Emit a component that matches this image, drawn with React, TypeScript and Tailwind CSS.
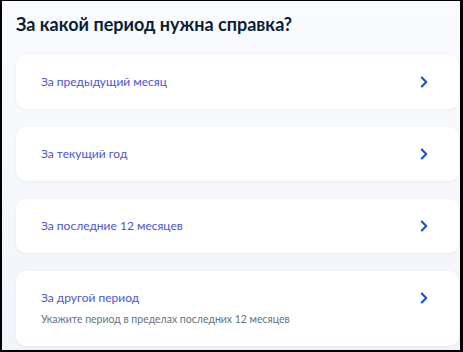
import { ChevronRight } from 'lucide-react';

const ITEMS = [
  { title: 'За предыдущий месяц' },
  { title: 'За текущий год' },
  { title: 'За последние 12 месяцев' },
  { title: 'За другой период', hint: 'Укажите период в пределах последних 12 месяцев' },
];

export default function App() {
  return (
    <div
      className="w-[463px] h-[352px] overflow-hidden border-black border-l-2 border-t border-r-[3px] border-b-2 bg-gradient-to-b from-[#fafbfe] to-[#f1f4f9]"
      style={{ fontFamily: 'Lato, "Noto Sans", sans-serif' }}
    >
      <div className="pl-[14px] pr-[1px] pt-[10px]">
        <h1 className="text-[18px] leading-[26px] font-bold text-[#0b1f33]">
          За какой период нужна справка?
        </h1>
        <div className="mt-[18px] flex flex-col gap-[18px]">
          {ITEMS.map(item => (
            <button
              key={item.title}
              className={`w-full bg-white rounded-[10px] shadow-[0_1px_3px_rgba(30,60,120,0.06)] pl-[25px] pr-[26px] flex items-center justify-between text-left ${item.hint ? 'h-[75px]' : 'h-[54px]'}`}
            >
              <div className={item.hint ? '-mt-[3px]' : ''}>
                <div className="text-[12px] leading-[18px] text-[#4c53d6]">{item.title}</div>
                {item.hint && (
                  <div className="mt-[5px] text-[10.5px] leading-[14px] text-[#66727f]">{item.hint}</div>
                )}
              </div>
              <ChevronRight size={18} strokeWidth={2.6} className={`text-[#0d4cd3] ${item.hint ? '-mt-[22px]' : ''}`} />
            </button>
          ))}
        </div>
      </div>
    </div>
  );
}
